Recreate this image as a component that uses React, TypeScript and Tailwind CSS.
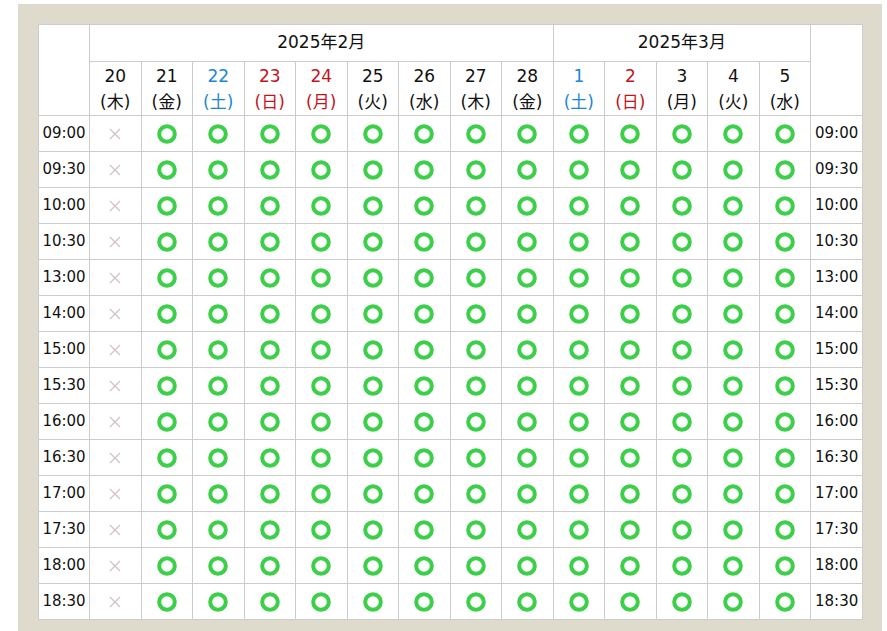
const days = [
  { d: "20", w: "木", c: "" },
  { d: "21", w: "金", c: "" },
  { d: "22", w: "土", c: "text-[#1a86d6]" },
  { d: "23", w: "日", c: "text-[#c3141c]" },
  { d: "24", w: "月", c: "text-[#c3141c]" },
  { d: "25", w: "火", c: "" },
  { d: "26", w: "水", c: "" },
  { d: "27", w: "木", c: "" },
  { d: "28", w: "金", c: "" },
  { d: "1", w: "土", c: "text-[#1a86d6]" },
  { d: "2", w: "日", c: "text-[#c3141c]" },
  { d: "3", w: "月", c: "" },
  { d: "4", w: "火", c: "" },
  { d: "5", w: "水", c: "" },
];

const times = [
  "09:00", "09:30", "10:00", "10:30", "13:00", "14:00", "15:00",
  "15:30", "16:00", "16:30", "17:00", "17:30", "18:00", "18:30",
];

function Circle() {
  return (
    <svg width="20" height="20" viewBox="0 0 20 20" className="mx-auto block">
      <circle cx="10" cy="10" r="7.8" fill="none" stroke="#3ccf4a" strokeWidth="4" />
    </svg>
  );
}

function Cross() {
  return (
    <svg width="12" height="12" viewBox="0 0 12 12" className="mx-auto block">
      <path d="M1 1 L11 11 M11 1 L1 11" stroke="#d2c4c6" strokeWidth="1.3" />
    </svg>
  );
}

export default function App() {
  const cell = "border border-[#cccccc] text-center p-0";
  return (
    <div className="min-h-[631px] bg-white pt-[4px] pl-[18px] pr-[5px] font-['DejaVu_Sans','Noto_Sans_CJK_JP',sans-serif] text-[#111]">
      <div className="w-[864px] bg-[#dedbcd] px-[20px] pt-[20px] pb-[20px]">
        <table className="w-[824px] table-fixed border-collapse bg-white">
          <colgroup>
            <col className="w-[51px]" />
            {days.map((_, i) => (
              <col key={i} className="w-[51.5px]" />
            ))}
            <col className="w-[52px]" />
          </colgroup>
          <thead>
            <tr className="h-[37px]">
              <th rowSpan={2} className={cell}></th>
              <th colSpan={9} className={`${cell} text-[17px] font-normal`}>2025年2月</th>
              <th colSpan={5} className={`${cell} text-[17px] font-normal`}>2025年3月</th>
              <th rowSpan={2} className={cell}></th>
            </tr>
            <tr className="h-[54px]">
              {days.map((x, i) => (
                <th key={i} className={`${cell} ${x.c} text-[17px] font-normal leading-[26px]`}>
                  <div>{x.d}</div>
                  <div>({x.w})</div>
                </th>
              ))}
            </tr>
          </thead>
          <tbody>
            {times.map((t) => (
              <tr key={t} className="h-[36px]">
                <td className={`${cell} text-[15px]`}>{t}</td>
                {days.map((_, i) => (
                  <td key={i} className={cell}>
                    {i === 0 ? <Cross /> : <Circle />}
                  </td>
                ))}
                <td className={`${cell} text-[15px]`}>{t}</td>
              </tr>
            ))}
          </tbody>
        </table>
      </div>
    </div>
  );
}
